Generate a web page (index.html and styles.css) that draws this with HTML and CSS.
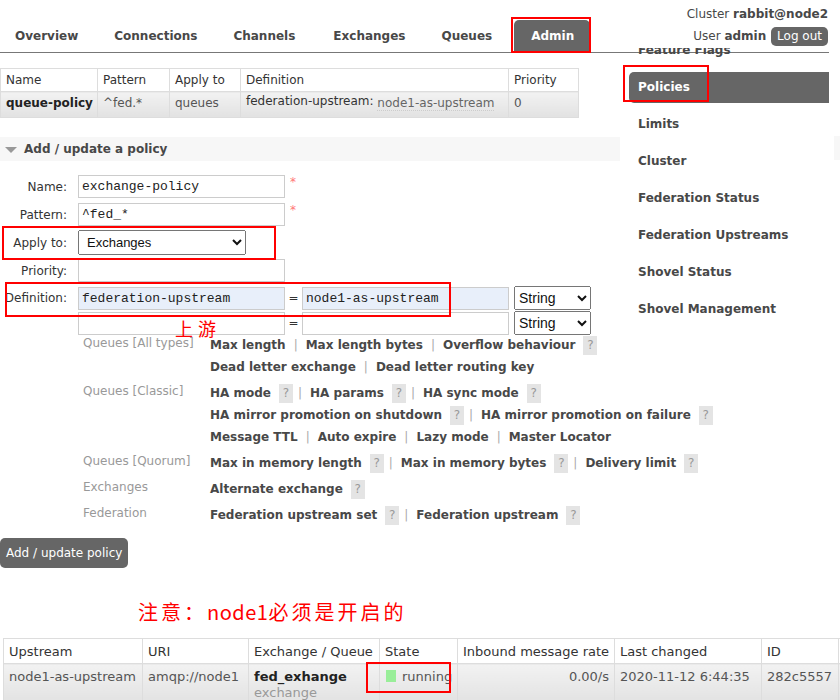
FILE: index.html
```html
<!DOCTYPE html>
<html lang="en">
<head>
<meta charset="utf-8">
<title>RabbitMQ Management - Policies</title>
<link rel="stylesheet" href="styles.css">
</head>
<body>
<div class="page">
  <header class="top">
    <ul class="tabs">
      <li><a>Overview</a></li>
      <li><a>Connections</a></li>
      <li><a>Channels</a></li>
      <li class="t-ex"><a>Exchanges</a></li>
      <li><a>Queues</a></li>
      <li class="active"><a>Admin</a></li>
    </ul>
    <div class="login">
      <div class="cluster">Cluster <b>rabbit@node2</b></div>
      <div class="user">User <b>admin</b> <span class="logout">Log out</span></div>
    </div>
  </header>

  <div class="main">
    <div class="content">
      <table class="list policies">
        <colgroup><col class="c1"><col class="c2"><col class="c3"><col class="c4"><col class="c5"></colgroup>
        <thead>
          <tr><th>Name</th><th>Pattern</th><th>Apply to</th><th>Definition</th><th>Priority</th></tr>
        </thead>
        <tbody>
          <tr>
            <td class="strong">queue-policy</td>
            <td>^fed.*</td>
            <td>queues</td>
            <td><span class="kv-k">federation-upstream:</span> <span class="kv-v">node1-as-upstream</span></td>
            <td>0</td>
          </tr>
        </tbody>
      </table>

      <h2 class="section">Add / update a policy</h2>

      <div class="pform">
        <div class="frow r-name">
          <label>Name:</label>
          <input class="in" type="text" value="exchange-policy">
          <span class="req">*</span>
        </div>
        <div class="frow r-pattern">
          <label>Pattern:</label>
          <input class="in" type="text" value="^fed_*">
          <span class="req">*</span>
        </div>
        <div class="frow r-apply">
          <label>Apply to:</label>
          <select class="sel-apply"><option>Exchanges</option></select>
        </div>
        <div class="frow r-prio">
          <label>Priority:</label>
          <input class="in" type="text" value="">
        </div>
        <div class="frow r-def">
          <label>Definition:</label>
          <input class="in blue" type="text" value="federation-upstream">
          <span class="eq">=</span>
          <input class="in blue" type="text" value="node1-as-upstream">
          <select class="sel-type"><option>String</option></select>
        </div>
        <div class="frow r-def2">
          <label></label>
          <input class="in" type="text" value="">
          <span class="eq">=</span>
          <input class="in" type="text" value="">
          <select class="sel-type"><option>String</option></select>
        </div>
      </div>

      <div class="help">
        <div class="hgroup">
          <div class="hlabel">Queues [All types]</div>
          <div class="hvals">
            <div class="hline">Max length<span class="sep">|</span>Max length bytes<span class="sep">|</span>Overflow behaviour<span class="q">?</span></div>
            <div class="hline">Dead letter exchange<span class="sep">|</span>Dead letter routing key</div>
          </div>
        </div>
        <div class="hgroup">
          <div class="hlabel">Queues [Classic]</div>
          <div class="hvals">
            <div class="hline">HA mode<span class="q">?</span><span class="sep">|</span>HA params<span class="q">?</span><span class="sep">|</span>HA sync mode<span class="q">?</span></div>
            <div class="hline">HA mirror promotion on shutdown<span class="q">?</span><span class="sep">|</span>HA mirror promotion on failure<span class="q">?</span></div>
            <div class="hline">Message TTL<span class="sep">|</span>Auto expire<span class="sep">|</span>Lazy mode<span class="sep">|</span>Master Locator</div>
          </div>
        </div>
        <div class="hgroup">
          <div class="hlabel">Queues [Quorum]</div>
          <div class="hvals">
            <div class="hline">Max in memory length<span class="q">?</span><span class="sep">|</span>Max in memory bytes<span class="q">?</span><span class="sep">|</span>Delivery limit<span class="q">?</span></div>
          </div>
        </div>
        <div class="hgroup">
          <div class="hlabel">Exchanges</div>
          <div class="hvals">
            <div class="hline">Alternate exchange<span class="q">?</span></div>
          </div>
        </div>
        <div class="hgroup">
          <div class="hlabel">Federation</div>
          <div class="hvals">
            <div class="hline">Federation upstream set<span class="q">?</span><span class="sep">|</span>Federation upstream<span class="q">?</span></div>
          </div>
        </div>
      </div>

      <button class="btn" type="button">Add / update policy</button>

      <p class="note">注意：<span class="lat">node1</span>必须是开启的</p>
    </div>

    <nav class="side">
      <ul>
        <li><a>Feature Flags</a></li>
        <li class="sel"><a>Policies</a></li>
        <li><a>Limits</a></li>
        <li><a>Cluster</a></li>
        <li><a>Federation Status</a></li>
        <li><a>Federation Upstreams</a></li>
        <li><a>Shovel Status</a></li>
        <li><a>Shovel Management</a></li>
      </ul>
      <span class="edge"></span>
    </nav>
  </div>

  <table class="list fed">
    <colgroup><col class="f1"><col class="f2"><col class="f3"><col class="f4"><col class="f5"><col class="f6"><col class="f7"><col class="f8"></colgroup>
    <thead>
      <tr><th>Upstream</th><th>URI</th><th>Exchange / Queue</th><th>State</th><th>Inbound message rate</th><th>Last changed</th><th>ID</th><th></th></tr>
    </thead>
    <tbody>
      <tr>
        <td>node1-as-upstream</td>
        <td>amqp://node1</td>
        <td><span class="xname">fed_exhange</span><span class="xtype">exchange</span></td>
        <td><span class="dot"></span>running</td>
        <td class="num">0.00/s</td>
        <td>2020-11-12 6:44:35</td>
        <td>282c5557</td>
        <td></td>
      </tr>
    </tbody>
  </table>

  <span class="mark m-admin"></span>
  <span class="mark m-policies"></span>
  <span class="mark m-apply"></span>
  <span class="mark m-def"></span>
  <span class="mark m-state"></span>
  <span class="anno">上游</span>
</div>
</body>
</html>
```

FILE: styles.css
```css
* { box-sizing: border-box; }

body {
  margin: 0;
  background: #fff;
  color: #484848;
  font: 12px "DejaVu Sans", Verdana, sans-serif;
}

.page {
  position: relative;
  width: 840px;
  height: 700px;
  overflow: hidden;
}

/* ---------- header ---------- */
.top {
  display: flex;
  justify-content: space-between;
  height: 53px;
  width: 829px;
  border-bottom: 1px solid #777;
}

.tabs {
  display: flex;
  align-items: flex-end;
  list-style: none;
  margin: 0 0 0 -3px;
  padding: 0;
}

.tabs a {
  display: block;
  height: 32px;
  line-height: 32px;
  margin: 0 3px;
  padding: 0 15px;
  font-weight: bold;
  color: #484848;
}

.tabs .t-ex a { margin-left: 5px; }

.tabs .active a {
  margin-left: 4px;
  padding: 0 16px 0 17px;
  background: #666;
  color: #fff;
  border-radius: 5px 5px 0 0;
}

.login {
  padding: 7px 1px 0 0;
  text-align: right;
  color: #484848;
}

.cluster { line-height: 15px; }

.user {
  margin-top: 5px;
  height: 19px;
  line-height: 19px;
  white-space: nowrap;
}

.logout {
  display: inline-block;
  margin-left: 1px;
  height: 19px;
  line-height: 19px;
  padding: 0 6px;
  background: #666;
  color: #fff;
  border-radius: 5px;
}

/* ---------- main ---------- */
.main {
  display: grid;
  grid-template-columns: 620px 220px;
}

/* tables */
.list {
  border-collapse: collapse;
  table-layout: fixed;
}

.list th {
  font-weight: normal;
  text-align: left;
  color: #333;
  background: #fff;
  border: 1px solid #ddd;
  padding: 0 5px;
  white-space: nowrap;
}

.list td {
  border: 1px solid #ddd;
  padding: 0 5px;
  color: #555;
  white-space: nowrap;
  background: linear-gradient(#f2f2f2, #e2e2e2);
}

.policies {
  margin-top: 15px;
  width: 578px;
}
.policies .c1 { width: 97px; }
.policies .c2 { width: 72px; }
.policies .c3 { width: 71px; }
.policies .c4 { width: 268px; }
.policies .c5 { width: 70px; }
.policies th { height: 23px; }
.policies td { height: 26px; padding-bottom: 3px; }
.policies .strong { font-weight: bold; color: #222; }
.kv-k { color: #333; position: relative; top: -2px; }
.kv-v { color: #666; border-bottom: 1px dotted #ccc; }

/* section header */
.section {
  position: relative;
  margin: 19px 0 0;
  height: 24px;
  line-height: 24px;
  padding-left: 24px;
  background: #f7f7f7;
  font-size: 12px;
  font-weight: bold;
  color: #484848;
}
.section::before {
  content: "";
  position: absolute;
  left: 5px;
  top: 10px;
  border-left: 6px solid transparent;
  border-right: 6px solid transparent;
  border-top: 6px solid #999;
}

/* form */
.pform { margin-top: 14px; }

.frow {
  display: flex;
  align-items: center;
}
.frow label {
  width: 67px;
  margin-right: 11px;
  text-align: right;
  color: #333;
  flex: none;
}
.r-name { margin-bottom: 5px; }
.r-pattern { margin-bottom: 4px; }
.r-apply { margin-bottom: 4px; }
.r-prio { margin-bottom: 4px; }
.r-def { margin-bottom: 1px; }

.in {
  width: 207px;
  height: 23px;
  margin: 0;
  padding: 0 3px;
  border: 1px solid #ccc;
  border-radius: 0;
  background: #fff;
  font: 13px "Liberation Mono", "Courier New", monospace;
  color: #222;
  flex: none;
}
.in.blue { background: #e8effa; }

.req {
  align-self: flex-start;
  margin-left: 5px;
  color: #f77;
  font-size: 12px;
}

.sel-apply {
  width: 168px;
  height: 25px;
  margin: 0;
  padding-left: 4px;
  font: 13px "Liberation Sans", Arial, sans-serif;
  color: #111;
}

.eq {
  width: 17px;
  text-align: center;
  color: #333;
  flex: none;
}

.sel-type {
  width: 77px;
  height: 24px;
  margin: 0 0 0 5px;
  font: 14px "Liberation Sans", Arial, sans-serif;
  color: #111;
}

/* help section */
.help {
  margin-top: -1px;
  padding-left: 83px;
}
.hgroup {
  display: grid;
  grid-template-columns: 127px auto;
  margin-bottom: 4px;
}
.hlabel {
  color: #999;
  line-height: 18px;
}
.hline {
  height: 22px;
  line-height: 22px;
  font-weight: bold;
  color: #484848;
  white-space: nowrap;
}
.sep {
  padding: 0 8px;
  font-weight: normal;
  color: #aaa;
}
.q {
  display: inline-block;
  width: 14px;
  height: 19px;
  line-height: 19px;
  margin-left: 8px;
  margin-right: -3px;
  vertical-align: middle;
  text-align: center;
  background: #e4e4e4;
  color: #999;
  font-weight: normal;
}

.btn {
  display: block;
  margin-top: 12px;
  height: 30px;
  padding: 0 6px;
  border: 0;
  border-radius: 5px;
  background: #666;
  color: #fff;
  font: 12px "DejaVu Sans", Verdana, sans-serif;
}

.note {
  margin: 29px 0 0;
  padding-left: 138px;
  height: 24px;
  line-height: 24px;
  font: 20px "Noto Sans CJK SC", sans-serif;
  letter-spacing: 3px;
  color: #f00;
}
.note .lat { letter-spacing: 0.5px; }

/* sidebar */
.side {
  position: relative;
  margin-top: -5px;
  overflow: hidden;
}
.side ul {
  list-style: none;
  margin: -16px 0 0;
  padding: 0 0 0 9px;
}
.side li { padding: 3px 0; }
.side a {
  display: block;
  width: 200px;
  height: 31px;
  line-height: 31px;
  padding-left: 9px;
  font-weight: bold;
  color: #484848;
  white-space: nowrap;
}
.side .sel a {
  background: #666;
  color: #fff;
  border-radius: 5px 0 0 5px;
}
.side .edge {
  position: absolute;
  right: 0;
  top: 88px;
  width: 6px;
  height: 24px;
  background: #f7f7f7;
}

/* bottom federation table */
.fed {
  margin: 17px 0 0 3px;
  width: 900px;
  font-size: 13px;
}
.fed .f1 { width: 139px; }
.fed .f2 { width: 106px; }
.fed .f3 { width: 131px; }
.fed .f4 { width: 78px; }
.fed .f5 { width: 157px; }
.fed .f6 { width: 147px; }
.fed .f7 { width: 77px; }
.fed .f8 { width: 65px; }
.fed th { height: 25px; }
.fed td {
  height: 40px;
  vertical-align: top;
  padding-top: 4px;
  line-height: 18px;
}
.fed .num { text-align: right; }
.xname { display: block; font-weight: bold; color: #222; }
.xtype { display: block; color: #999; line-height: 14px; }
.dot {
  display: inline-block;
  width: 10px;
  height: 12px;
  margin: 0 6px 0 1px;
  vertical-align: -1px;
  background: #99ee99;
}

/* red annotations laid over the screenshot */
.mark {
  position: absolute;
  border: 2px solid #f00;
}
.m-admin { left: 511px; top: 17px; width: 80px; height: 36px; }
.m-policies { left: 623px; top: 65px; width: 86px; height: 37px; }
.m-apply { left: 2px; top: 226px; width: 274px; height: 34px; }
.m-def { left: 5px; top: 282px; width: 446px; height: 35px; }
.m-state { left: 366px; top: 662px; width: 85px; height: 31px; }

.anno {
  position: absolute;
  left: 175px;
  top: 316px;
  font: 18px "Noto Sans CJK SC", sans-serif;
  letter-spacing: 5px;
  color: #f00;
  line-height: 24px;
}
```
